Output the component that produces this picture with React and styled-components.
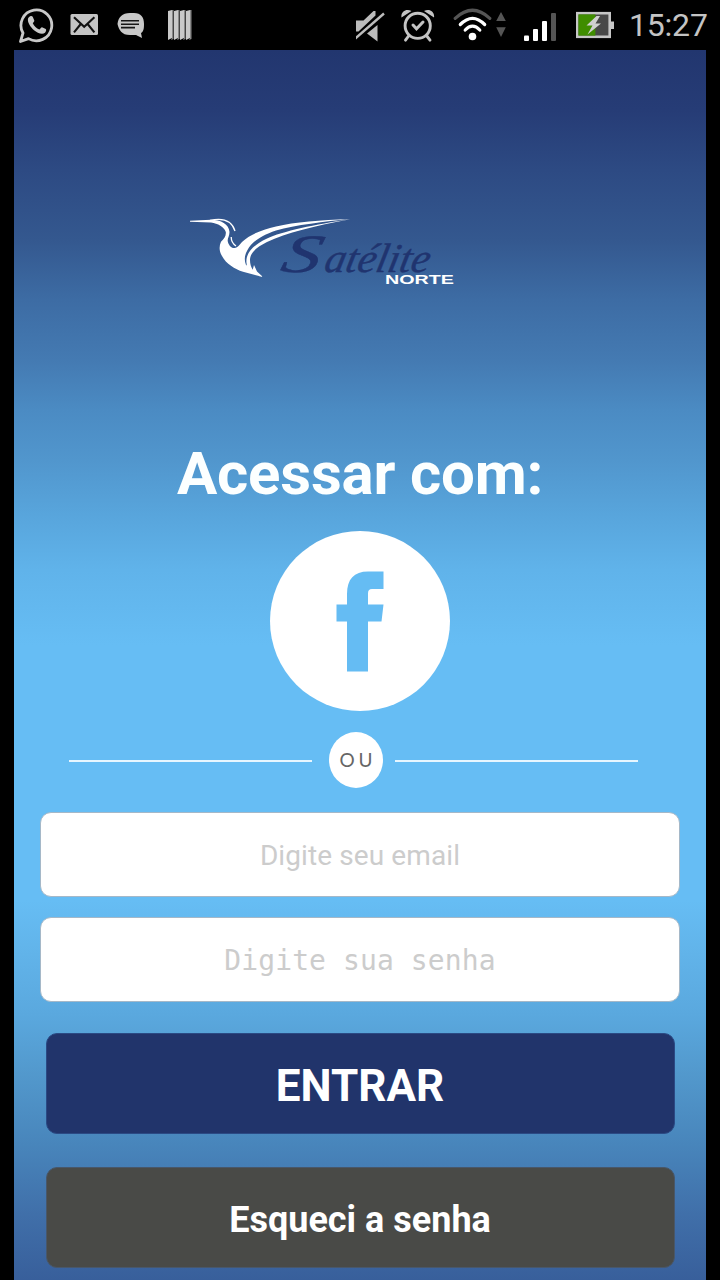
import React from "react";
import styled, { createGlobalStyle } from "styled-components";

const GlobalStyle = createGlobalStyle`
    *{
        box-sizing:border-box;
    }
    body{
        margin:0;
        background-color:#000;
        font-family:Roboto, sans-serif;
    }
`;
const Phone = styled.div`
    width:720px;
    height:1280px;
    display:flex;
    flex-direction:column;
    overflow:hidden;
    background-color:#000;
`;
const StatusBar = styled.header`
    height:50px;
    flex-shrink:0;
    display:flex;
    justify-content:space-between;
    padding:0px 12px 0px 18px;
`;
const Notifications = styled.div`
    display:flex;
`;
const System = styled.div`
    display:flex;
`;
const StatusIcon = styled.svg`
    width:${props=>props.$width}px;
    height:50px;
    margin-right:${props=>props.$space || 0}px;
    flex-shrink:0;
`;
const Clock = styled.span`
    width:79px;
    color:#c4c4c4;
    font-size:32px;
    line-height:50px;
    letter-spacing:-0.2px;
    white-space:nowrap;
`;
const Screen = styled.main`
    flex:1;
    margin:0px 14px;
    display:flex;
    flex-direction:column;
    align-items:center;
    background:linear-gradient(
        #22366f 0px,
        #263c76 60px,
        #2d4a83 120px,
        #34588f 190px,
        #3d6ca4 250px,
        #447ab2 310px,
        #4b8bc3 360px,
        #5196cd 410px,
        #58a5dc 465px,
        #60b3ea 520px,
        #66bdf4 595px,
        #66bdf4 850px,
        #61b3e9 905px,
        #5aa8de 965px,
        #5298cc 1025px,
        #4885bb 1095px,
        #406fa9 1165px,
        #385f9b 1230px
    );
`;
const Logo = styled.svg`
    width:270px;
    height:74px;
    margin:164px 72px 0px 0px;
    overflow:visible;
`;
const Title = styled.h1`
    margin:151px 0px 0px 0px;
    color:#fcffff;
    font-size:60px;
    font-weight:700;
    line-height:70px;
    letter-spacing:-0.2px;
    white-space:nowrap;
`;
const FacebookButton = styled.button`
    width:180px;
    height:180px;
    margin-top:22px;
    padding:0;
    border:none;
    border-radius:50%;
    background-color:#fff;
    flex-shrink:0;
`;
const Divider = styled.div`
    width:569px;
    height:56px;
    margin:21px 13px 0px 0px;
    display:flex;
    align-items:center;
    justify-content:space-between;
`;
const Line = styled.span`
    width:243px;
    height:2px;
    margin-top:2px;
    background-color:#e6f6ff;
`;
const Or = styled.span`
    width:54px;
    height:56px;
    margin-left:5px;
    border-radius:50%;
    background-color:#fff;
    color:#666;
    font-family:Lato, sans-serif;
    font-size:19px;
    line-height:56px;
    letter-spacing:4px;
    text-align:center;
    text-indent:4px;
`;
const Form = styled.form`
    width:640px;
    margin-top:24px;
    display:flex;
    flex-direction:column;
    align-items:center;
`;
const Input = styled.input`
    width:640px;
    height:85px;
    margin-bottom:20px;
    padding:2px 20px 0px;
    border:1px solid #a5b8c8;
    border-radius:11px;
    background-color:#fff;
    font-family:${props=>props.$mono ? "'DejaVu Sans Mono', monospace" : "Roboto, sans-serif"};
    font-size:28px;
    letter-spacing:0.1px;
    text-align:center;
    outline:none;

    &::placeholder{
        color:#ccc;
        opacity:1;
    }
`;
const Button = styled.button`
    width:629px;
    height:101px;
    margin-top:${props=>props.$top}px;
    padding:4px 0px 0px;
    border:1px solid ${props=>props.$border};
    border-radius:11px;
    background-color:${props=>props.$color};
    color:#fff;
    font-family:Roboto, sans-serif;
    font-size:${props=>props.$size}px;
    font-weight:700;
    line-height:1;
`;

function NotificationIcons(){
    return(
        <Notifications>
            <StatusIcon $width={36} $space={16} viewBox="0 0 36 50">
                <path d="M2.5 41.5 L5 33 A15.4 15.4 0 1 1 10.5 38.6 Z" fill="none" stroke="#c8c8c8" strokeWidth="2.8" strokeLinejoin="round"/>
                <path d="M12.2 16.2 C13 15.7 14.2 15.8 14.7 16.8 L16.3 20.4 C16.6 21.4 15 22.7 14.8 23.2 C16 26 18.5 28.4 21.3 29.4 C22.2 29.2 23 27.2 24 27.2 L27.8 29 C28.6 29.6 28 31.8 27 32.7 C24.2 35.2 19.2 32.8 16 30.2 C12.4 27 9.6 22.6 9.9 19.3 C10.1 17.9 11 16.8 12.2 16.2 Z" fill="#c8c8c8"/>
            </StatusIcon>
            <StatusIcon $width={30} $space={16} viewBox="0 0 30 50">
                <rect x=".5" y="14" width="27.5" height="21" rx="1.5" fill="#c4c4c4"/>
                <path d="M4 17.2 L14.2 26.8 L24.4 17.2 M4 32.4 L10.8 24 M24.4 32.4 L17.6 24" fill="none" stroke="#111" strokeWidth="2.1"/>
            </StatusIcon>
            <StatusIcon $width={32} $space={18} viewBox="0 0 32 50">
                <path d="M14 13 H18 C25 13 28 17 28 24 C28 29 27.5 31.5 25 33 L26 38 L20 35 H14 C5.5 35 3 30 1.5 24 C2.5 17 6 13 14 13 Z" fill="#c8c8c8"/>
                <path d="M5 20.8 H23 M5 24.2 H23 M5 27.6 H19" stroke="#161616" strokeWidth="1.6"/>
            </StatusIcon>
            <StatusIcon $width={28} viewBox="0 0 28 50">
                <path d="M2 11 L6 10 V38 L2 40 Z M8 11 L12 10 V38 L8 40 Z M14 11 L18 10 V38 L14 40 Z M20 11 L24 10 V38 L20 40 Z" fill="#c9c9c9"/>
                <path d="M6 10 H7.5 V39 L5 40 L6 38 Z M12 10 H13.5 V39 L11 40 L12 38 Z M18 10 H19.5 V39 L17 40 L18 38 Z M24 10 H25.5 V39 L23 40 L24 38 Z" fill="#888"/>
            </StatusIcon>
        </Notifications>
    );
}

function SystemIcons(){
    return(
        <System>
            <StatusIcon $width={30} $space={15} viewBox="0 0 30 50">
                <path d="M0 20.5 H7.5 L17.5 11 H19.5 V15.5 L2.5 31.5 H0 Z" fill="#bcbcbc"/>
                <path d="M21.5 25 V41.5 L11 33.5 Z" fill="#bcbcbc"/>
                <path d="M-1 38.8 L28 13.5" stroke="#bcbcbc" strokeWidth="2.4"/>
            </StatusIcon>
            <StatusIcon $width={34} $space={18} viewBox="0 0 34 50">
                <g fill="none" stroke="#c4c4c4" strokeWidth="2.9" strokeLinecap="round">
                    <circle cx="16.7" cy="25.8" r="12.6"/>
                    <path d="M7.6 36 L4.5 40.2 M25.8 36 L29 40.2"/>
                    <path d="M12 25 L15.5 28.8 L22 22" strokeWidth="3"/>
                </g>
                <path d="M.5 17.5 C-.5 12 5 8 10.5 11 Z M33 17.5 C34 12 28.5 8 23 11 Z" fill="#c4c4c4"/>
            </StatusIcon>
            <StatusIcon $width={40} $space={3} viewBox="0 0 40 50">
                <g fill="none" strokeWidth="3.2" strokeLinecap="round">
                    <path d="M2.2 18.3 Q19.5 2.2 36.8 18.3" stroke="#555"/>
                    <path d="M7.3 24.5 Q19.5 12.3 31.7 24.5" stroke="#fff"/>
                    <path d="M12.2 30 Q19.5 22.2 26.8 30" stroke="#fff"/>
                </g>
                <circle cx="19.5" cy="36.5" r="3.8" fill="#fff"/>
            </StatusIcon>
            <StatusIcon $width={12} $space={16} viewBox="0 0 12 50">
                <path d="M5 12 L9.8 21 H.2 Z M5 37 L9.8 27.3 H.2 Z" fill="#555"/>
            </StatusIcon>
            <StatusIcon $width={34} $space={18} viewBox="0 0 34 50">
                <rect x="0" y="35.5" width="5" height="5.5" rx="1" fill="#fff"/>
                <rect x="9" y="29" width="5" height="12" rx="1" fill="#fff"/>
                <rect x="18" y="21" width="5" height="20" rx="1" fill="#fff"/>
                <rect x="27" y="13" width="5" height="28" rx="1" fill="#555"/>
            </StatusIcon>
            <StatusIcon $width={40} $space={13} viewBox="0 0 40 50">
                <path d="M34 21.5 H38 V29 H34 Z" fill="#c6c6c6"/>
                <rect x="1.2" y="13.2" width="32.5" height="23.6" fill="#484848" stroke="#c6c6c6" strokeWidth="2.6"/>
                <rect x="2.4" y="14.4" width="17" height="21.2" fill="#3f8d00"/>
                <path d="M20.5 16 L10.5 25.5 H16.5 L11.5 34.5 L25 23.5 H19.5 L24 16 Z" fill="#d0d0d0"/>
            </StatusIcon>
            <Clock>15:27</Clock>
        </System>
    );
}

function SateliteLogo(){
    return(
        <Logo viewBox="0 0 270 74">
            {/* bird */}
            <g transform="translate(1 0)" fill="#fff">
                <path d="M0 6.8 L21 5.8 C31 6 39 10 39.5 18 C39.5 22 37.5 24 37.7 27 C38.5 31 41 34.5 45 34 C48 33.5 49 31 52 28 C60 20 72 16 86 12.5 C105 8 130 6 160 5 C135 7.5 105 11 86 16.5 C70 22 62 28 57.5 36 C54.5 41 54 46 56 51 C56.5 52 57 51 56.5 49 C55.5 40 62 32 76 25 C93 17 125 10.5 160 5.3 C125 12 96 19 77 28 C66 33.5 60 39 60 46 C60 50 61 53 62.7 55.7 L64 51 L67 57.5 L73 63 L53 57.8 C45 55 36 50 32 42 C29 37 29 32 31 27.8 C34 25 36.3 22 35.8 18 C34 13 28 9.5 21 8.6 L0 7.8 Z"/>
                <path d="M20 6.4 C32 3.8 41.5 5.5 45 17 M41.2 23 C41.2 27 43 30 46 32" fill="none" stroke="#fff" strokeWidth="1.3"/>
            </g>
            <g fill="#20346f" stroke="#20346f" strokeWidth=".4" fontFamily="'Liberation Serif', serif" fontStyle="italic">
                <text transform="translate(90 57.5) skewX(-14) scale(1.45 1)" fontSize="54">S</text>
                <text transform="translate(134 57.5) skewX(-12)" fontSize="41" textLength="105" lengthAdjust="spacingAndGlyphs">atélite</text>
            </g>
            <text x="196" y="70" fill="#fff" fontFamily="'Liberation Sans', sans-serif" fontSize="12.5" fontWeight="700" textLength="69" lengthAdjust="spacingAndGlyphs">NORTE</text>
        </Logo>
    );
}

function App(){
    return(
        <Phone>
            <GlobalStyle/>
            <StatusBar>
                <NotificationIcons/>
                <SystemIcons/>
            </StatusBar>
            <Screen>
                <SateliteLogo/>
                <Title>Acessar com:</Title>
                <FacebookButton type="button" aria-label="Facebook">
                    <svg width="180" height="180" viewBox="0 0 180 180">
                        <path d="M77 140.5 V90.5 H66.5 V73.5 H77 V63 C77 48 84 40.5 98 40.5 H113.5 V58 H102 C99 58 98 59.5 98 62.5 V73.5 H113.5 L111.5 90.5 H98 V140.5 Z" fill="#65bcf3"/>
                    </svg>
                </FacebookButton>
                <Divider>
                    <Line/>
                    <Or>OU</Or>
                    <Line/>
                </Divider>
                <Form>
                    <Input type="email" placeholder="Digite seu email"/>
                    <Input type="password" placeholder="Digite sua senha" $mono/>
                    <Button type="button" $top={11} $size={44} $color="#21346b" $border="#2b4a84">ENTRAR</Button>
                    <Button type="button" $top={33} $size={36} $color="#494a47" $border="#48576a">Esqueci a senha</Button>
                </Form>
            </Screen>
        </Phone>
    );
}
export default App;
